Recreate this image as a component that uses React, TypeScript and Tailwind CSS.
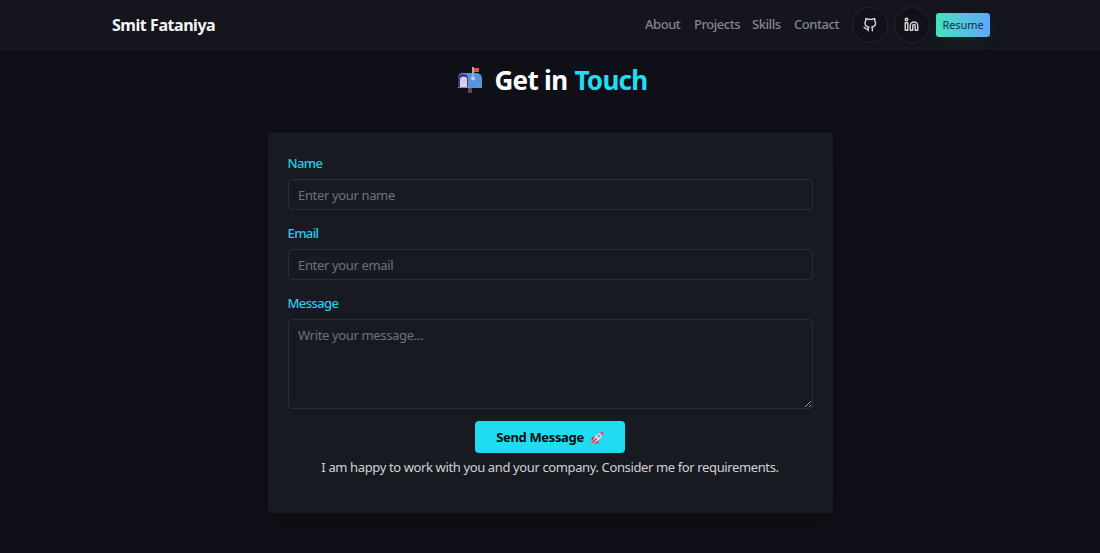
import { FiGithub, FiLinkedin } from "react-icons/fi";

const links = [
  { label: "About", className: "w-9" },
  { label: "Projects", className: "w-[45px]" },
  { label: "Skills", className: "w-[29px]" },
  { label: "Contact", className: "w-[45px]" },
];

function Mailbox() {
  return (
    <svg width="26" height="28" viewBox="0 0 26 28" aria-hidden="true">
      <path d="M11 20h4v7h-4z" fill="#694153" />
      <path d="M5 7h14q6 0 6 6v9H1v-9q0-6 4-6z" fill="#5596dc" />
      <path d="M1 21v-8q0-5 5-5t5 5v8z" fill="#39348c" />
      <path d="M3 12q4-3 7 0v9H3z" fill="#ddd1e9" />
      <path d="m3 12 4 4 3-4" fill="none" stroke="#c8bbd8" />
      <path d="M16 2h6v4h-6z" fill="#f0502f" />
      <path d="M16 1v12" stroke="#b0a5b6" strokeWidth="2" />
      <circle cx="16" cy="12.500" r="2" fill="#c4c6e5" />
    </svg>
  );
}

function Rocket() {
  return (
    <svg width="14" height="14" viewBox="0 0 14 14" aria-hidden="true">
      <path d="M4.500 5 2 6.500 1 9.500l4-1zm5 3.500L8 12l-3 1 1-4z" fill="#ed2464" />
      <path d="m3 9 3 2-5.500 2.500z" fill="#f87c32" />
      <path d="M3 10.500C3.500 6 7 2 13 1c-.5 5.500-4.500 9.500-9 10.500z" fill="#d9d1e7" />
      <path d="m9.500 1.800 4-1.300-1 4z" fill="#f33b68" />
      <circle cx="8.800" cy="5" r="1.300" fill="#6b95d2" />
      <path d="m3 11 3.500-3.500" stroke="#d81e5b" strokeWidth="1.500" />
    </svg>
  );
}

function Navbar() {
  return (
    <header className="h-[50px] border-b border-[#1b1c24] bg-[#14151d]">
      <div className="mx-auto flex h-[49px] w-[878px] items-center justify-between">
        <a href="#" className="ml-px text-[16px] font-bold tracking-[-0.450px] whitespace-nowrap text-[#f5f5f7]">
          Smit Fataniya
        </a>
        <nav className="flex items-center">
          <div className="mr-[13px] flex gap-[13px] text-[13px] font-medium tracking-[-0.450px] text-[#86868c]">
            {links.map((link) => (
              <a key={link.label} href="#" className={`${link.className} whitespace-nowrap`}>
                {link.label}
              </a>
            ))}
          </div>
          <a href="#" aria-label="GitHub" className="mr-1.5 flex size-9 items-center justify-center rounded-full border border-[#25262e] bg-[#101119] pr-px text-[#d0d0d5]">
            <FiGithub size={14} strokeWidth={2.5} />
          </a>
          <a href="#" aria-label="LinkedIn" className="mr-1.5 flex size-9 items-center justify-center rounded-full border border-[#25262e] bg-[#101119] pr-px text-[#d0d0d5]">
            <FiLinkedin size={15} strokeWidth={2.4} />
          </a>
          <a href="#" className="-mr-px flex h-6 w-[54px] items-center justify-center rounded-[3px] bg-linear-to-r from-[#43e3bd] to-[#60a5fa] pt-0.5 text-[11px] tracking-[-0.100px] text-[#17303b] shadow-[0_5px_15px_#43e3bd10]">
            Resume
          </a>
        </nav>
      </div>
    </header>
  );
}

function Field({ label, type, placeholder }: { label: string; type: string; placeholder: string }) {
  return (
    <label className="mb-3.5 block">
      <span className="block h-[25px] text-[13px] leading-[18px] font-medium tracking-[-0.600px] text-[#20d0e5]">{label}</span>
      <input
        type={type}
        placeholder={placeholder}
        className="block h-[31px] w-full rounded-[4px] border border-[#2c2e36] px-[9.500px] text-[13px] tracking-[-0.350px] text-white placeholder:text-[#6f7178]"
      />
    </label>
  );
}

export default function App() {
  return (
    <div className="h-[553px] overflow-hidden bg-[#0f0f17] font-['Noto_Sans',sans-serif]">
      <Navbar />
      <main>
        <h2 className="flex h-[60px] items-center justify-center pl-1.5 text-[26px] font-bold tracking-[-0.700px] text-white">
          <Mailbox />
          <span className="ml-3 flex w-[155px] gap-[7px] whitespace-nowrap">
            <span>Get in</span>
            <span className="text-[#22dcf1]">Touch</span>
          </span>
        </h2>
        <form className="mx-auto mt-[23px] h-[380px] w-[565px] rounded-[3px] bg-[#181a22] px-5 pt-[21px] shadow-[0_8px_28px_#0003]">
          <Field label="Name" type="text" placeholder="Enter your name" />
          <Field label="Email" type="email" placeholder="Enter your email" />
          <label className="block">
            <span className="block h-[25px] text-[13px] leading-[18px] font-medium tracking-[-0.600px] text-[#20d0e5]">Message</span>
            <textarea
              placeholder="Write your message..."
              className="block h-[90px] w-full rounded-[4px] border border-[#2c2e36] px-[9.500px] py-1.5 text-[13px] leading-[19px] tracking-[-0.350px] text-white placeholder:text-[#6f7178]"
            />
          </label>
          <button
            type="button"
            className="mx-auto mt-3 flex h-8 w-[150px] items-center justify-center gap-1.5 rounded-[4px] bg-[#20dcf0] pt-0.5 text-[13px] font-bold tracking-[-0.350px] whitespace-nowrap text-[#080b10]"
          >
            Send Message
            <Rocket />
          </button>
          <p className="mt-1 text-center text-[13px] leading-[20px] tracking-[-0.375px] whitespace-nowrap text-[#d0d1d5]">
            I am happy to work with you and your company. Consider me for requirements.
          </p>
        </form>
      </main>
    </div>
  );
}
